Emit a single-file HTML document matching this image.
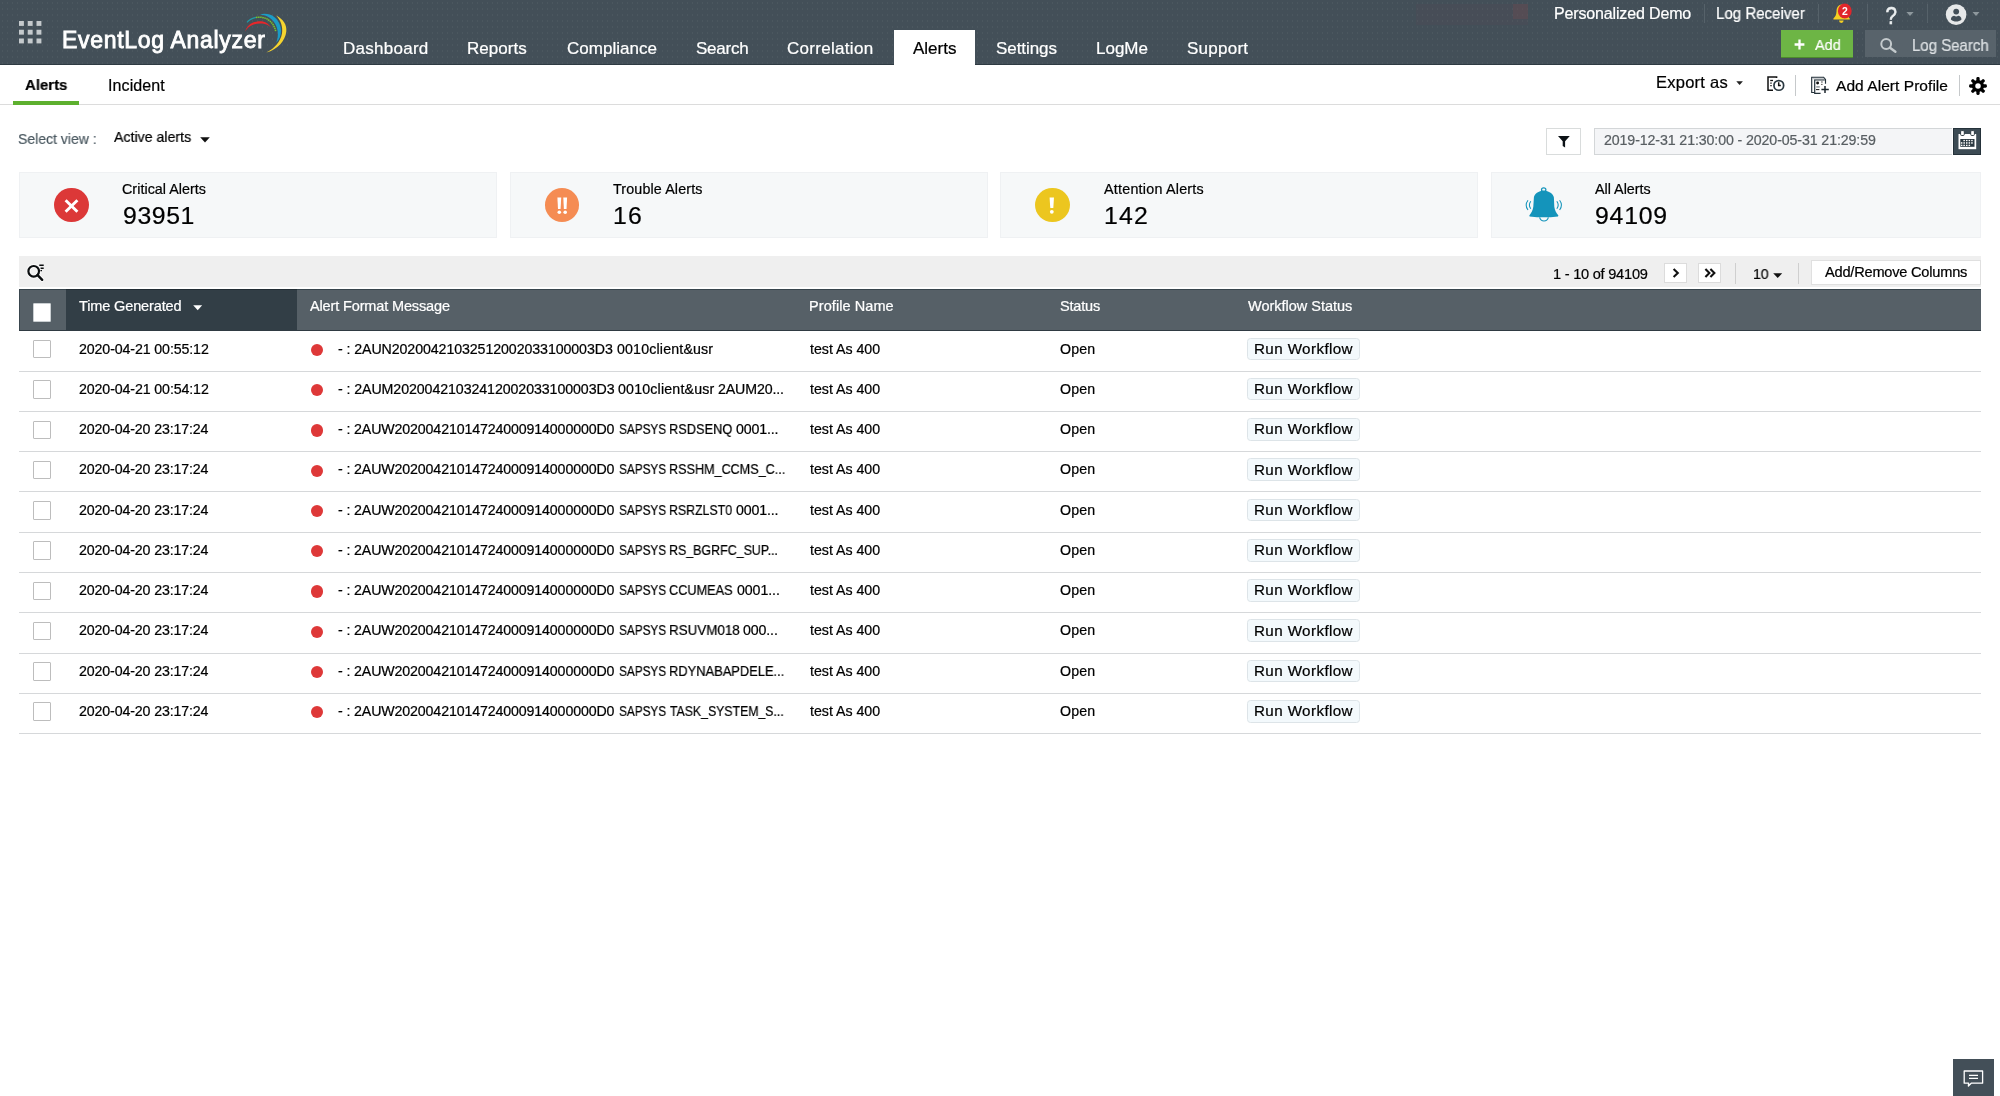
<!DOCTYPE html>
<html><head><meta charset="utf-8"><title>EventLog Analyzer</title>
<style>
*{box-sizing:border-box;margin:0;padding:0}
html,body{width:2000px;height:1096px;overflow:hidden;background:#fff}
body{position:relative;font-family:"Liberation Sans",sans-serif}
.t{position:absolute;white-space:nowrap;line-height:1;font-family:"Liberation Sans",sans-serif;will-change:transform;-webkit-text-stroke:0.22px currentColor}
.a{position:absolute}
#hdr{left:0;top:0;width:2000px;height:64.9px;background:#434f58;background-image:radial-gradient(circle,rgba(255,255,255,.045) .55px,transparent .95px);background-size:5px 6px}
#hdrsh{left:0;top:63.7px;width:2000px;height:1.2px;background:#2e3a42}
#tab{left:893.6px;top:29.6px;width:81.4px;height:36px;background:#fff}
.hs{top:4px;width:1px;height:19px;background:#56626a}
#add{left:1780.5px;top:30px;width:72.5px;height:27px;background:#6db545;box-shadow:0 1px 0 #4d8a2c}
#ls{left:1865px;top:30.2px;width:131.4px;height:26.5px;background:#58636b}
#subline{left:0;top:104.2px;width:2000px;height:1px;background:#dcdcdc}
#subgreen{left:12.8px;top:101.3px;width:66.4px;height:3.7px;background:#5db02e}
.ss{top:75.2px;width:1px;height:21.2px;background:#c6c9cb}
.card{top:172.4px;height:65.2px;background:#f6f8f9;border:1px solid #eff1f3}
.circ{top:187.7px;width:34.6px;height:34.3px;border-radius:50%}
#fbtn{left:1546.2px;top:128px;width:35px;height:26.8px;background:#fff;border:1px solid #d9dcdc}
#date{left:1594.1px;top:127.9px;width:357.9px;height:27px;background:#f4f5f7;border:1px solid #d3d6d8;border-right:0}
#cal{left:1953.4px;top:127.9px;width:27.7px;height:27px;background:#3c4b54;border:1px solid #25323a}
#tb{left:19.2px;top:256.2px;width:1961.6px;height:30.8px;background:#efefef}
.pb{top:263px;width:23.3px;height:20.4px;background:#fff;border:1px solid #dcdcdc}
.ts{top:262.5px;width:1px;height:21px;background:#cfcfcf}
#arc{left:1811px;top:259.5px;width:169.7px;height:25px;background:#fff;border:1px solid #e0e0e0}
#th{left:19px;top:288.8px;width:1962px;height:41.8px;background:#566067;border-top:1px solid #38454d;border-left:1px solid #3a464e}
#thd{left:66px;top:288.8px;width:231px;height:41.8px;background:#323e46;border-top:1px solid #222d34}
#thb{left:19px;top:329.6px;width:1962px;height:1.2px;background:#2f3a42}
#hcb{left:32.5px;top:302.5px;width:18.7px;height:19.2px;background:#fff;border:1.2px solid #c9ced1;border-radius:1px}
.cb{position:absolute;left:32.6px;width:18.4px;height:18.4px;background:#fff;border:1.3px solid #bdbdbd;border-radius:1px}
.dot{position:absolute;left:310.5px;width:12.3px;height:12.3px;border-radius:50%;background:#de3838}
.rw{position:absolute;left:1247.4px;width:113px;height:22.6px;background:#f3f9fc;border:1px solid #dde4e8;border-radius:3.5px}
.rl{position:absolute;left:19px;width:1962px;height:1px;background:#d6d8da}
#chat{left:1953px;top:1058.5px;width:40.6px;height:38px;background:#434f58}
svg{position:absolute;overflow:visible;will-change:transform}
.p{display:inline-block;width:0;height:0}

</style></head>
<body>
<div class="a" id="hdr"></div>
<div class="a" id="hdrsh"></div>
<div class="a" id="tab"></div>
<!-- grid icon -->
<svg style="left:18.9px;top:21.3px" width="23" height="23" viewBox="0 0 23 23"><g fill="#c5cacd">
<rect x="0" y="0" width="4.9" height="4.9"/><rect x="8.75" y="0" width="4.9" height="4.9"/><rect x="17.5" y="0" width="4.9" height="4.9"/>
<rect x="0" y="8.75" width="4.9" height="4.9"/><rect x="8.75" y="8.75" width="4.9" height="4.9"/><rect x="17.5" y="8.75" width="4.9" height="4.9"/>
<rect x="0" y="17.5" width="4.9" height="4.9"/><rect x="8.75" y="17.5" width="4.9" height="4.9"/><rect x="17.5" y="17.5" width="4.9" height="4.9"/></g></svg>
<!-- logo swoosh -->
<svg style="left:240px;top:10px" width="50" height="46" viewBox="240 10 50 46" fill="none">
<path d="M276.2 15.6 C283.5 19.5 287 25 286.3 31.5 C285.3 41 277.5 49.5 266.4 52.6 C274.5 48.2 280.6 41.5 282 33.5 C283 27 280.8 20.5 276.2 15.6 Z" fill="#f6d42f"/>
<path d="M260 14.4 C265 13.2 270.5 14 274.5 17.2 C278.6 20.6 281 25.5 281 31 C281 35.6 279.4 39.6 276.2 42.8 C277.6 39 278.2 35.2 277.7 31.4 C277 25.8 274.2 21 269.6 17.8 C266.8 15.8 263.5 14.7 260 14.4 Z" fill="#1b9bc6"/>
<path d="M247 22.4 C249.5 19.6 252.5 18 256 17.4" stroke="#1f9aa8" stroke-width="1.2"/>
<path d="M256 17.4 C259 16.9 262 17.2 265 18.1 C270.5 20.2 274.4 25 275.7 31.2" stroke="#7ac62c" stroke-width="1.5" stroke-dasharray="1.5 0.6"/>
<path d="M245 31.8 C246.2 27.6 249 24.4 253 22.6 C256 21.3 259.4 20.8 262.8 21.4 C266.2 22 269 24 271.2 27.8 C268.6 25.2 265.8 23.8 262.4 23.5 C259.4 23.2 256.4 23.6 253.6 24.6 C249.8 26 247 28.4 245 31.8 Z" fill="#e8262a"/>
</svg>
<div class="a" style="left:1416px;top:4px;width:112px;height:21px;background:rgba(110,72,74,.10)"></div>
<div class="a" style="left:1513px;top:4px;width:15px;height:15px;background:rgba(104,76,80,.42)"></div>
<!-- header right -->
<div class="a hs" style="left:1703.5px"></div>
<div class="a hs" style="left:1818px"></div>
<div class="a hs" style="left:1866.5px"></div>
<div class="a hs" style="left:1927px"></div>
<!-- bell -->
<svg style="left:1830px;top:0px" width="26" height="26" viewBox="1830 0 26 26">
<path d="M1841.6 4.6 C1838 5 1836.6 8 1836.5 11.4 C1836.4 14.4 1835.4 16.6 1833.4 18.4 V19.5 H1849.8 V18.4 C1847.8 16.6 1846.8 14.4 1846.7 11.4 C1846.6 8 1845.2 5 1841.6 4.6 Z" fill="#f4cf22"/>
<path d="M1839 20.6 a2.3 2.4 0 0 0 4.6 0 Z" fill="#f4cf22"/>
<ellipse cx="1844.8" cy="11" rx="6.9" ry="7.6" fill="#e0262c"/>
<text x="1844.8" y="14.6" font-family="Liberation Sans, sans-serif" font-size="10.4" font-weight="700" fill="#fff" text-anchor="middle">2</text>
</svg>
<!-- question -->
<svg style="left:1880px;top:0px" width="40" height="28" viewBox="1880 0 40 28">
<text x="0" y="0" transform="translate(1885.6 23.8) scale(0.86 1)" font-family="Liberation Sans, sans-serif" font-size="24" font-weight="400" fill="#eceff0" stroke="#eceff0" stroke-width="0.5">?</text>
<path d="M1906.4 11.9 h7.2 l-3.6 4.2 z" fill="#8e989d"/>
</svg>
<!-- user -->
<svg style="left:1940px;top:0px" width="44" height="28" viewBox="1940 0 44 28">
<circle cx="1956.1" cy="14.6" r="10.3" fill="#e6e8e9"/>
<circle cx="1956.2" cy="11.6" r="2.9" fill="#434f58"/>
<path d="M1950.9 19.6 C1951 17 1952.6 15.8 1954.2 15.8 C1955.4 16.8 1957 16.8 1958.2 15.8 C1959.8 15.8 1961.4 17 1961.5 19.6 C1960 21 1958.2 21.6 1956.2 21.6 C1954.2 21.6 1952.4 21 1950.9 19.6 Z" fill="#434f58"/>
<path d="M1972.5 11.9 h7 l-3.5 4.2 z" fill="#8e989d"/>
</svg>
<div class="a" id="add"></div>
<svg style="left:1793.5px;top:38.5px" width="11" height="11" viewBox="0 0 11 11"><path d="M5.5 0.6 V10.4 M0.6 5.5 H10.4" stroke="#fff" stroke-width="2.3"/></svg>
<div class="a" id="ls"></div>
<svg style="left:1875px;top:34px" width="26" height="22" viewBox="1875 34 26 22"><circle cx="1886.2" cy="44" r="4.9" fill="none" stroke="#c4cacd" stroke-width="2"/><path d="M1890 47.8 L1895.4 51.8" stroke="#c4cacd" stroke-width="2.4" stroke-linecap="round"/></svg>
<!-- subnav -->
<div class="a" id="subline"></div>
<div class="a" id="subgreen"></div>
<svg style="left:1735.5px;top:80.5px" width="8" height="5" viewBox="0 0 8 5"><path d="M0.3 0.3 h6.6 l-3.3 3.6 z" fill="#222"/></svg>
<!-- schedule icon -->
<svg style="left:1762px;top:72px" width="26" height="26" viewBox="1762 72 26 26" fill="none" stroke="#111" stroke-width="1.5">
<path d="M1776.6 78 V77.1 H1768 V90.2 H1773"/>
<path d="M1770.2 80.5 H1773" stroke-width="1.3"/><path d="M1770.2 83.1 H1771.8 M1770.2 85.7 H1771.8" stroke-width="1.2" stroke="#333"/>
<circle cx="1778.8" cy="85.4" r="4.85" stroke="#2a3841" stroke-width="1.7"/>
<path d="M1778.7 82.3 V85.6 H1780.8" stroke-width="1.5"/>
</svg>
<div class="a ss" style="left:1794.5px"></div>
<!-- add alert profile icon -->
<svg style="left:1806px;top:72px" width="28" height="26" viewBox="1806 72 28 26" fill="none" stroke="#25323b" stroke-width="1.3">
<path d="M1812 77.4 H1823.4 L1825.2 79.8 H1814 Z" fill="#c9cccf" stroke="none"/>
<path d="M1814.6 92.5 H1811.7 V77.2 H1823.6 L1825.5 79.4 V83.8" stroke-width="1.15"/>
<path d="M1820.6 93.3 H1814.7 V80 H1824.8" stroke-width="1.2"/>
<circle cx="1817.6" cy="83" r="1.45" fill="#111" stroke="none"/>
<path d="M1821 82 H1822.8" stroke-width="1.2" stroke="#555"/><path d="M1821 84.4 H1822.6" stroke-width="0.9" stroke="#444"/>
<path d="M1816.2 86.9 H1819.8" stroke-width="1.4" stroke="#8a9196"/>
<path d="M1816 89.6 H1819.4" stroke-width="1" stroke="#111"/>
<path d="M1825 86 V93 M1821.4 89.6 H1828.8" stroke="#1c262d" stroke-width="1.5"/>
</svg>
<div class="a ss" style="left:1959px"></div>
<!-- gear -->
<svg style="left:1969.1px;top:77.1px" width="18" height="18" viewBox="-9 -9 18 18">
<g fill="#000"><circle r="6.1"/>
<rect x="-1.65" y="-8.9" width="3.3" height="17.8" rx="1.3"/>
<rect x="-1.65" y="-8.9" width="3.3" height="17.8" rx="1.3" transform="rotate(45)"/>
<rect x="-1.65" y="-8.9" width="3.3" height="17.8" rx="1.3" transform="rotate(90)"/>
<rect x="-1.65" y="-8.9" width="3.3" height="17.8" rx="1.3" transform="rotate(135)"/></g>
<circle r="2.75" fill="#fff"/>
</svg>
<!-- select view caret -->
<svg style="left:199.5px;top:137px" width="10" height="6" viewBox="0 0 10 6"><path d="M0.2 0.3 h9.6 l-4.8 5.2 z" fill="#111"/></svg>
<!-- filter + date -->
<div class="a" id="fbtn"></div>
<svg style="left:1555px;top:133px" width="18" height="18" viewBox="1555 133 18 18"><path d="M1558 136 H1569.8 L1565.1 141.2 V147.6 L1562.7 146 V141.2 Z" fill="#0c1216"/></svg>
<div class="a" id="date"></div>
<div class="a" id="cal"></div>
<svg style="left:1955px;top:128px" width="26" height="26" viewBox="1955 128 26 26">
<path d="M1958.5 134 H1976.2 V149.2 H1958.5 Z" fill="#fff"/>
<rect x="1960.6" y="130.6" width="3.7" height="4.9" rx="1.1" fill="#fff" stroke="#25323a" stroke-width="0.9"/>
<rect x="1970.7" y="130.6" width="3.7" height="4.9" rx="1.1" fill="#fff" stroke="#25323a" stroke-width="0.9"/>
<rect x="1960.3" y="139" width="14.2" height="7.8" fill="#2b3941"/>
<g fill="#fff"><rect x="1963.4" y="139.9" width="1.5" height="1.3"/><rect x="1966" y="139.9" width="1.5" height="1.3"/><rect x="1968.6" y="139.9" width="1.5" height="1.3"/><rect x="1971.2" y="139.9" width="1.5" height="1.3"/>
<rect x="1960.9" y="142.2" width="1.5" height="1.5"/><rect x="1963.4" y="142.2" width="1.5" height="1.5"/><rect x="1966" y="142.2" width="1.5" height="1.5"/><rect x="1968.6" y="142.2" width="1.5" height="1.5"/><rect x="1971.2" y="142.2" width="1.5" height="1.5"/>
<rect x="1960.9" y="144.7" width="1.5" height="1.3"/><rect x="1963.4" y="144.7" width="1.5" height="1.3"/><rect x="1966" y="144.7" width="1.5" height="1.3"/><rect x="1968.6" y="144.7" width="1.5" height="1.3"/></g>
</svg>
<!-- cards -->
<div class="a card" style="left:19px;width:478.4px"></div>
<div class="a card" style="left:510px;width:477.8px"></div>
<div class="a card" style="left:1000px;width:478.4px"></div>
<div class="a card" style="left:1491px;width:490px"></div>
<div class="a circ" style="left:54px;background:#dc3838"></div>
<svg style="left:64px;top:198.5px" width="15" height="14" viewBox="0 0 15 14"><path d="M1.6 1.2 L13.4 12.8 M13.4 1.2 L1.6 12.8" stroke="#fff" stroke-width="2.9"/></svg>
<div class="a circ" style="left:544.6px;background:#f58c53"></div>
<svg style="left:556.6px;top:196.8px" width="11" height="18" viewBox="0 0 11 18" fill="#fff"><path d="M0.4 0.4 H4.2 L3.6 12 H1 Z"/><path d="M6.3 0.4 H10.1 L9.5 12 H6.9 Z"/><circle cx="2.3" cy="15.2" r="1.8"/><circle cx="8.2" cy="15.2" r="1.8"/></svg>
<div class="a circ" style="left:1035.2px;background:#ecc61f"></div>
<svg style="left:1049.1px;top:196.8px" width="6" height="18" viewBox="0 0 6 18" fill="#fff"><path d="M0.6 0.4 H5 L4.3 11.1 H1.3 Z"/><circle cx="2.8" cy="14.8" r="1.9"/></svg>
<!-- big bell -->
<svg style="left:1520px;top:184px" width="48" height="42" viewBox="1520 184 48 42">
<path d="M1543.7 190.4 C1538.6 191 1534.2 193.6 1533.9 197.4 L1533.3 206.8 C1532.8 210.4 1531.4 213 1529.3 215.4 L1529.6 216.6 L1537 217.2 H1550.6 L1558 216.6 L1558.4 215.4 C1556.2 213 1554.8 210.4 1554.3 206.8 L1553.9 197.4 C1553.6 193.6 1548.8 191 1543.7 190.4 Z" fill="#1494bb"/>
<ellipse cx="1543.7" cy="189.8" rx="2.2" ry="1.9" fill="none" stroke="#1494bb" stroke-width="1.25"/>
<path d="M1539.6 217.4 C1540.4 220 1542 221 1544 221 C1546 221 1547.6 220 1548.4 217.4" fill="none" stroke="#1494bb" stroke-width="1.2"/>
<g fill="none" stroke="#1494bb" stroke-width="1.05">
<path d="M1530.8 201.2 C1529 203.6 1529 206.4 1530.8 208.8"/><path d="M1528 200.2 C1525.6 203.4 1525.6 206.8 1528 210"/>
<path d="M1556.8 201.2 C1558.6 203.6 1558.6 206.4 1556.8 208.8"/><path d="M1559.6 200.2 C1562 203.4 1562 206.8 1559.6 210"/></g>
</svg>
<!-- toolbar -->
<div class="a" id="tb"></div>
<svg style="left:24px;top:260px" width="24" height="24" viewBox="24 260 24 24" fill="none">
<g stroke="#fff" stroke-opacity=".75"><circle cx="33.7" cy="271.3" r="5.3" stroke-width="4.2"/><path d="M37.6 275.2 L42.2 279.8" stroke-width="4.4" stroke-linecap="round"/></g>
<circle cx="33.7" cy="271.3" r="5.3" stroke="#0a0d0f" stroke-width="2.2"/><path d="M37.6 275.2 L42.2 279.8" stroke="#0a0d0f" stroke-width="2.4" stroke-linecap="round"/>
<path d="M39.3 265.3 H43.7 M40.6 268.2 H43.7" stroke="#0a0d0f" stroke-width="1.4"/><path d="M40.4 270.6 H42" stroke="#0a0d0f" stroke-width="1.3"/></svg>
<div class="a pb" style="left:1664px"></div>
<svg style="left:1672px;top:268.2px" width="8" height="10" viewBox="0 0 8 10"><path d="M1.6 0.9 L5.8 5 L1.6 9.1" fill="none" stroke="#111" stroke-width="2.1"/></svg>
<div class="a pb" style="left:1697.5px"></div>
<svg style="left:1703.5px;top:268.2px" width="12" height="10" viewBox="0 0 12 10"><path d="M1.4 0.9 L5.4 5 L1.4 9.1 M6.4 0.9 L10.4 5 L6.4 9.1" fill="none" stroke="#111" stroke-width="2.1"/></svg>
<div class="a ts" style="left:1735px"></div>
<svg style="left:1772.8px;top:272.6px" width="10" height="6" viewBox="0 0 10 6"><path d="M0.2 0.3 h9 l-4.5 4.8 z" fill="#111"/></svg>
<div class="a ts" style="left:1797.5px"></div>
<div class="a" id="arc"></div>
<!-- table head -->
<div class="a" id="th"></div>
<div class="a" id="thd"></div>
<div class="a" id="thb"></div>
<div class="a" id="hcb"></div>
<svg style="left:193px;top:304.8px" width="10" height="6" viewBox="0 0 10 6"><path d="M0.2 0.3 h9 l-4.5 5 z" fill="#fff"/></svg>
<!-- chat -->
<div class="a" id="chat"></div>
<svg style="left:1962.5px;top:1069.5px" width="21" height="19" viewBox="0 0 21 19" fill="none" stroke="#fff"><path d="M1.2 1 H19.6 V13.2 H8.2 L5.4 16 L5.6 13.2 H1.2 Z" stroke-width="1.3" stroke-linejoin="round"/><path d="M6 5.4 H15 M6 8.4 H15" stroke-width="1.3"/></svg>

<div class="cb" style="top:340.05px"></div>
<div class="dot" style="top:343.75px"></div>
<div class="rw" style="top:337.60px"></div>
<div class="rl" style="top:370.67px"></div>
<div class="cb" style="top:380.32px"></div>
<div class="dot" style="top:384.02px"></div>
<div class="rw" style="top:377.87px"></div>
<div class="rl" style="top:410.94px"></div>
<div class="cb" style="top:420.59px"></div>
<div class="dot" style="top:424.29px"></div>
<div class="rw" style="top:418.14px"></div>
<div class="rl" style="top:451.21px"></div>
<div class="cb" style="top:460.86px"></div>
<div class="dot" style="top:464.56px"></div>
<div class="rw" style="top:458.41px"></div>
<div class="rl" style="top:491.48px"></div>
<div class="cb" style="top:501.13px"></div>
<div class="dot" style="top:504.83px"></div>
<div class="rw" style="top:498.68px"></div>
<div class="rl" style="top:531.75px"></div>
<div class="cb" style="top:541.40px"></div>
<div class="dot" style="top:545.10px"></div>
<div class="rw" style="top:538.95px"></div>
<div class="rl" style="top:572.02px"></div>
<div class="cb" style="top:581.67px"></div>
<div class="dot" style="top:585.37px"></div>
<div class="rw" style="top:579.22px"></div>
<div class="rl" style="top:612.29px"></div>
<div class="cb" style="top:621.94px"></div>
<div class="dot" style="top:625.64px"></div>
<div class="rw" style="top:619.49px"></div>
<div class="rl" style="top:652.56px"></div>
<div class="cb" style="top:662.21px"></div>
<div class="dot" style="top:665.91px"></div>
<div class="rw" style="top:659.76px"></div>
<div class="rl" style="top:692.83px"></div>
<div class="cb" style="top:702.48px"></div>
<div class="dot" style="top:706.18px"></div>
<div class="rw" style="top:700.03px"></div>
<div class="rl" style="top:733.10px"></div>
<span class="t" id="t0" style="left:62.11px;top:29.00px;font-size:23.0px;color:#fff;font-weight:400;letter-spacing:0.692px;-webkit-text-stroke:0.85px #fff;">EventLog Analyzer</span>
<span class="t" id="t1" style="left:343.12px;top:40.00px;font-size:17px;color:#fff;font-weight:400;letter-spacing:0.262px;">Dashboard</span>
<span class="t" id="t2" style="left:467.32px;top:40.00px;font-size:17px;color:#fff;font-weight:400;letter-spacing:0.043px;">Reports</span>
<span class="t" id="t3" style="left:566.65px;top:40.00px;font-size:17px;color:#fff;font-weight:400;letter-spacing:0.026px;">Compliance</span>
<span class="t" id="t4" style="left:695.74px;top:40.00px;font-size:17px;color:#fff;font-weight:400;letter-spacing:-0.244px;">Search</span>
<span class="t" id="t5" style="left:787.25px;top:40.00px;font-size:17px;color:#fff;font-weight:400;letter-spacing:0.299px;">Correlation</span>
<span class="t" id="t6" style="left:995.94px;top:40.00px;font-size:17px;color:#fff;font-weight:400;letter-spacing:-0.067px;">Settings</span>
<span class="t" id="t7" style="left:1096.12px;top:40.00px;font-size:17px;color:#fff;font-weight:400;letter-spacing:-0.014px;">LogMe</span>
<span class="t" id="t8" style="left:1187.34px;top:40.00px;font-size:17px;color:#fff;font-weight:400;letter-spacing:0.255px;">Support</span>
<span class="t" id="t9" style="left:913.08px;top:40.00px;font-size:17px;color:#000;font-weight:400;letter-spacing:-0.008px;">Alerts</span>
<span class="t" id="t10" style="left:1553.80px;top:6.00px;font-size:16px;color:#fff;font-weight:400;letter-spacing:-0.148px;">Personalized Demo</span>
<span class="t" id="t11" style="left:1715.87px;top:6.00px;font-size:16px;color:#fff;font-weight:400;letter-spacing:0.000px;transform:scaleX(0.9416);transform-origin:0 0;">Log Receiver</span>
<span class="t" id="t12" style="left:1814.57px;top:37.00px;font-size:15.5px;color:#fff;font-weight:400;letter-spacing:0.000px;transform:scaleX(0.9334);transform-origin:0 0;">Add</span>
<span class="t" id="t13" style="left:1912.47px;top:38.00px;font-size:15.9px;color:#dce0e3;font-weight:400;letter-spacing:0.000px;transform:scaleX(0.9436);transform-origin:0 0;">Log Search</span>
<span class="t" id="t14" style="left:24.73px;top:77.00px;font-size:15.5px;color:#000;font-weight:700;letter-spacing:0.000px;transform:scaleX(0.9644);transform-origin:0 0;">Alerts</span>
<span class="t" id="t15" style="left:107.63px;top:78.00px;font-size:16px;color:#000;font-weight:400;letter-spacing:0.104px;">Incident</span>
<span class="t" id="t16" style="left:1656.26px;top:74.00px;font-size:16.5px;color:#000;font-weight:400;letter-spacing:0.253px;">Export as</span>
<span class="t" id="t17" style="left:1836.08px;top:78.00px;font-size:15.5px;color:#000;font-weight:400;letter-spacing:0.053px;">Add Alert Profile</span>
<span class="t" id="t18" style="left:18.47px;top:131.00px;font-size:15px;color:#4b5961;font-weight:400;letter-spacing:0.000px;transform:scaleX(0.9348);transform-origin:0 0;">Select view :</span>
<span class="t" id="t19" style="left:113.68px;top:129.00px;font-size:15px;color:#000;font-weight:400;letter-spacing:0.000px;transform:scaleX(0.9440);transform-origin:0 0;">Active alerts</span>
<span class="t" id="t20" style="left:1604.40px;top:133.00px;font-size:14.2px;color:#585e62;font-weight:400;letter-spacing:-0.106px;">2019-12-31 21:30:00 - 2020-05-31 21:29:59</span>
<span class="t" id="t21" style="left:122.38px;top:182.00px;font-size:14.3px;color:#000;font-weight:400;letter-spacing:0.043px;">Critical Alerts</span>
<span class="t" id="t22" style="left:123.35px;top:204.00px;font-size:24.8px;color:#000;font-weight:400;letter-spacing:0.596px;">93951</span>
<span class="t" id="t23" style="left:613.39px;top:182.00px;font-size:14.3px;color:#000;font-weight:400;letter-spacing:0.133px;">Trouble Alerts</span>
<span class="t" id="t24" style="left:613.22px;top:204.00px;font-size:24.8px;color:#000;font-weight:400;letter-spacing:1.165px;">16</span>
<span class="t" id="t25" style="left:1104.08px;top:182.00px;font-size:14.3px;color:#000;font-weight:400;letter-spacing:0.237px;">Attention Alerts</span>
<span class="t" id="t26" style="left:1103.82px;top:204.00px;font-size:24.8px;color:#000;font-weight:400;letter-spacing:1.171px;">142</span>
<span class="t" id="t27" style="left:1594.68px;top:182.00px;font-size:14.3px;color:#000;font-weight:400;letter-spacing:0.011px;">All Alerts</span>
<span class="t" id="t28" style="left:1594.55px;top:204.00px;font-size:24.8px;color:#000;font-weight:400;letter-spacing:0.787px;">94109</span>
<span class="t" id="t29" style="left:1552.70px;top:267.00px;font-size:14.6px;color:#000;font-weight:400;letter-spacing:-0.236px;">1 - 10 of 94109</span>
<span class="t" id="t30" style="left:1752.73px;top:267.00px;font-size:14.6px;color:#000;font-weight:400;letter-spacing:0.000px;transform:scaleX(0.9681);transform-origin:0 0;">10</span>
<span class="t" id="t31" style="left:1825.08px;top:265.00px;font-size:14.6px;color:#000;font-weight:400;letter-spacing:-0.216px;">Add/Remove Columns</span>
<span class="t" id="t32" style="left:79.28px;top:299.00px;font-size:14.5px;color:#fff;font-weight:400;letter-spacing:-0.130px;">Time Generated</span>
<span class="t" id="t33" style="left:310.08px;top:299.00px;font-size:14.5px;color:#fff;font-weight:400;letter-spacing:-0.141px;">Alert Format Message</span>
<span class="t" id="t34" style="left:808.92px;top:299.00px;font-size:14.5px;color:#fff;font-weight:400;letter-spacing:0.073px;">Profile Name</span>
<span class="t" id="t35" style="left:1059.95px;top:299.00px;font-size:14.5px;color:#fff;font-weight:400;letter-spacing:-0.189px;">Status</span>
<span class="t" id="t36" style="left:1247.75px;top:299.00px;font-size:14.5px;color:#fff;font-weight:400;letter-spacing:-0.009px;">Workflow Status</span>
<span class="t" id="t37" style="left:78.80px;top:342.00px;font-size:14.2px;color:#000;font-weight:400;letter-spacing:-0.108px;">2020-04-21 00:55:12</span>
<span class="t" id="t38" style="left:338.23px;top:342.00px;font-size:14.2px;color:#000;font-weight:400;letter-spacing:-0.083px;">- : 2AUN20200421032512002033100003D3</span>
<span class="t" id="t39" style="left:616.56px;top:342.00px;font-size:14.2px;color:#000;font-weight:400;letter-spacing:0.170px;">0010client&amp;usr</span>
<span class="t" id="t40" style="left:809.90px;top:342.00px;font-size:14.2px;color:#000;font-weight:400;letter-spacing:-0.015px;">test As 400</span>
<span class="t" id="t41" style="left:1060.14px;top:342.00px;font-size:14.2px;color:#000;font-weight:400;letter-spacing:0.152px;">Open</span>
<span class="t" id="t42" style="left:1254.46px;top:341.00px;font-size:15.2px;color:#000;font-weight:400;letter-spacing:0.395px;">Run Workflow</span>
<span class="t" id="t43" style="left:78.80px;top:382.00px;font-size:14.2px;color:#000;font-weight:400;letter-spacing:-0.108px;">2020-04-21 00:54:12</span>
<span class="t" id="t44" style="left:338.23px;top:382.00px;font-size:14.2px;color:#000;font-weight:400;letter-spacing:-0.078px;">- : 2AUM20200421032412002033100003D3</span>
<span class="t" id="t45" style="left:618.31px;top:382.00px;font-size:14.2px;color:#000;font-weight:400;letter-spacing:0.189px;">0010client&amp;usr</span>
<span class="t" id="t46" style="left:718.15px;top:382.00px;font-size:14.2px;color:#000;font-weight:400;letter-spacing:-0.124px;">2AUM20...</span>
<span class="t" id="t47" style="left:809.90px;top:382.00px;font-size:14.2px;color:#000;font-weight:400;letter-spacing:-0.015px;">test As 400</span>
<span class="t" id="t48" style="left:1060.14px;top:382.00px;font-size:14.2px;color:#000;font-weight:400;letter-spacing:0.152px;">Open</span>
<span class="t" id="t49" style="left:1254.46px;top:381.00px;font-size:15.2px;color:#000;font-weight:400;letter-spacing:0.395px;">Run Workflow</span>
<span class="t" id="t50" style="left:78.80px;top:422.00px;font-size:14.2px;color:#000;font-weight:400;letter-spacing:-0.124px;">2020-04-20 23:17:24</span>
<span class="t" id="t51" style="left:338.23px;top:422.00px;font-size:14.2px;color:#000;font-weight:400;letter-spacing:-0.125px;">- : 2AUW20200421014724000914000000D0</span>
<span class="t" id="t52" style="left:618.81px;top:422.00px;font-size:14.2px;color:#000;font-weight:400;letter-spacing:0.000px;transform:scaleX(0.8303);transform-origin:0 0;">SAPSYS</span>
<span class="t" id="t53" style="left:669.05px;top:422.00px;font-size:14.2px;color:#000;font-weight:400;letter-spacing:0.000px;transform:scaleX(0.9008);transform-origin:0 0;">RSDSENQ</span>
<span class="t" id="t54" style="left:735.81px;top:422.00px;font-size:14.2px;color:#000;font-weight:400;letter-spacing:-0.168px;">0001...</span>
<span class="t" id="t55" style="left:809.90px;top:422.00px;font-size:14.2px;color:#000;font-weight:400;letter-spacing:-0.015px;">test As 400</span>
<span class="t" id="t56" style="left:1060.14px;top:422.00px;font-size:14.2px;color:#000;font-weight:400;letter-spacing:0.152px;">Open</span>
<span class="t" id="t57" style="left:1254.46px;top:421.00px;font-size:15.2px;color:#000;font-weight:400;letter-spacing:0.395px;">Run Workflow</span>
<span class="t" id="t58" style="left:78.80px;top:462.00px;font-size:14.2px;color:#000;font-weight:400;letter-spacing:-0.124px;">2020-04-20 23:17:24</span>
<span class="t" id="t59" style="left:338.23px;top:462.00px;font-size:14.2px;color:#000;font-weight:400;letter-spacing:-0.125px;">- : 2AUW20200421014724000914000000D0</span>
<span class="t" id="t60" style="left:618.81px;top:462.00px;font-size:14.2px;color:#000;font-weight:400;letter-spacing:0.000px;transform:scaleX(0.8303);transform-origin:0 0;">SAPSYS</span>
<span class="t" id="t61" style="left:669.06px;top:462.00px;font-size:14.2px;color:#000;font-weight:400;letter-spacing:0.000px;transform:scaleX(0.8882);transform-origin:0 0;">RSSHM_CCMS_C...</span>
<span class="t" id="t62" style="left:809.90px;top:462.00px;font-size:14.2px;color:#000;font-weight:400;letter-spacing:-0.015px;">test As 400</span>
<span class="t" id="t63" style="left:1060.14px;top:462.00px;font-size:14.2px;color:#000;font-weight:400;letter-spacing:0.152px;">Open</span>
<span class="t" id="t64" style="left:1254.46px;top:462.00px;font-size:15.2px;color:#000;font-weight:400;letter-spacing:0.395px;">Run Workflow</span>
<span class="t" id="t65" style="left:78.80px;top:503.00px;font-size:14.2px;color:#000;font-weight:400;letter-spacing:-0.124px;">2020-04-20 23:17:24</span>
<span class="t" id="t66" style="left:338.23px;top:503.00px;font-size:14.2px;color:#000;font-weight:400;letter-spacing:-0.125px;">- : 2AUW20200421014724000914000000D0</span>
<span class="t" id="t67" style="left:618.81px;top:503.00px;font-size:14.2px;color:#000;font-weight:400;letter-spacing:0.000px;transform:scaleX(0.8303);transform-origin:0 0;">SAPSYS</span>
<span class="t" id="t68" style="left:669.08px;top:503.00px;font-size:14.2px;color:#000;font-weight:400;letter-spacing:0.000px;transform:scaleX(0.8693);transform-origin:0 0;">RSRZLST0</span>
<span class="t" id="t69" style="left:735.81px;top:503.00px;font-size:14.2px;color:#000;font-weight:400;letter-spacing:-0.168px;">0001...</span>
<span class="t" id="t70" style="left:809.90px;top:503.00px;font-size:14.2px;color:#000;font-weight:400;letter-spacing:-0.015px;">test As 400</span>
<span class="t" id="t71" style="left:1060.14px;top:503.00px;font-size:14.2px;color:#000;font-weight:400;letter-spacing:0.152px;">Open</span>
<span class="t" id="t72" style="left:1254.46px;top:502.00px;font-size:15.2px;color:#000;font-weight:400;letter-spacing:0.395px;">Run Workflow</span>
<span class="t" id="t73" style="left:78.80px;top:543.00px;font-size:14.2px;color:#000;font-weight:400;letter-spacing:-0.124px;">2020-04-20 23:17:24</span>
<span class="t" id="t74" style="left:338.23px;top:543.00px;font-size:14.2px;color:#000;font-weight:400;letter-spacing:-0.125px;">- : 2AUW20200421014724000914000000D0</span>
<span class="t" id="t75" style="left:618.81px;top:543.00px;font-size:14.2px;color:#000;font-weight:400;letter-spacing:0.000px;transform:scaleX(0.8303);transform-origin:0 0;">SAPSYS</span>
<span class="t" id="t76" style="left:669.08px;top:543.00px;font-size:14.2px;color:#000;font-weight:400;letter-spacing:0.000px;transform:scaleX(0.8765);transform-origin:0 0;">RS_BGRFC_SUP...</span>
<span class="t" id="t77" style="left:809.90px;top:543.00px;font-size:14.2px;color:#000;font-weight:400;letter-spacing:-0.015px;">test As 400</span>
<span class="t" id="t78" style="left:1060.14px;top:543.00px;font-size:14.2px;color:#000;font-weight:400;letter-spacing:0.152px;">Open</span>
<span class="t" id="t79" style="left:1254.46px;top:542.00px;font-size:15.2px;color:#000;font-weight:400;letter-spacing:0.395px;">Run Workflow</span>
<span class="t" id="t80" style="left:78.80px;top:583.00px;font-size:14.2px;color:#000;font-weight:400;letter-spacing:-0.124px;">2020-04-20 23:17:24</span>
<span class="t" id="t81" style="left:338.23px;top:583.00px;font-size:14.2px;color:#000;font-weight:400;letter-spacing:-0.125px;">- : 2AUW20200421014724000914000000D0</span>
<span class="t" id="t82" style="left:618.81px;top:583.00px;font-size:14.2px;color:#000;font-weight:400;letter-spacing:0.000px;transform:scaleX(0.8303);transform-origin:0 0;">SAPSYS</span>
<span class="t" id="t83" style="left:669.45px;top:583.00px;font-size:14.2px;color:#000;font-weight:400;letter-spacing:0.000px;transform:scaleX(0.8954);transform-origin:0 0;">CCUMEAS</span>
<span class="t" id="t84" style="left:737.06px;top:583.00px;font-size:14.2px;color:#000;font-weight:400;letter-spacing:-0.085px;">0001...</span>
<span class="t" id="t85" style="left:809.90px;top:583.00px;font-size:14.2px;color:#000;font-weight:400;letter-spacing:-0.015px;">test As 400</span>
<span class="t" id="t86" style="left:1060.14px;top:583.00px;font-size:14.2px;color:#000;font-weight:400;letter-spacing:0.152px;">Open</span>
<span class="t" id="t87" style="left:1254.46px;top:582.00px;font-size:15.2px;color:#000;font-weight:400;letter-spacing:0.395px;">Run Workflow</span>
<span class="t" id="t88" style="left:78.80px;top:623.00px;font-size:14.2px;color:#000;font-weight:400;letter-spacing:-0.124px;">2020-04-20 23:17:24</span>
<span class="t" id="t89" style="left:338.23px;top:623.00px;font-size:14.2px;color:#000;font-weight:400;letter-spacing:-0.125px;">- : 2AUW20200421014724000914000000D0</span>
<span class="t" id="t90" style="left:618.81px;top:623.00px;font-size:14.2px;color:#000;font-weight:400;letter-spacing:0.000px;transform:scaleX(0.8303);transform-origin:0 0;">SAPSYS</span>
<span class="t" id="t91" style="left:669.00px;top:623.00px;font-size:14.2px;color:#000;font-weight:400;letter-spacing:0.000px;transform:scaleX(0.9440);transform-origin:0 0;">RSUVM018</span>
<span class="t" id="t92" style="left:743.31px;top:623.00px;font-size:14.2px;color:#000;font-weight:400;letter-spacing:-0.124px;">000...</span>
<span class="t" id="t93" style="left:809.90px;top:623.00px;font-size:14.2px;color:#000;font-weight:400;letter-spacing:-0.015px;">test As 400</span>
<span class="t" id="t94" style="left:1060.14px;top:623.00px;font-size:14.2px;color:#000;font-weight:400;letter-spacing:0.152px;">Open</span>
<span class="t" id="t95" style="left:1254.46px;top:623.00px;font-size:15.2px;color:#000;font-weight:400;letter-spacing:0.395px;">Run Workflow</span>
<span class="t" id="t96" style="left:78.80px;top:664.00px;font-size:14.2px;color:#000;font-weight:400;letter-spacing:-0.124px;">2020-04-20 23:17:24</span>
<span class="t" id="t97" style="left:338.23px;top:664.00px;font-size:14.2px;color:#000;font-weight:400;letter-spacing:-0.125px;">- : 2AUW20200421014724000914000000D0</span>
<span class="t" id="t98" style="left:618.81px;top:664.00px;font-size:14.2px;color:#000;font-weight:400;letter-spacing:0.000px;transform:scaleX(0.8303);transform-origin:0 0;">SAPSYS</span>
<span class="t" id="t99" style="left:669.04px;top:664.00px;font-size:14.2px;color:#000;font-weight:400;letter-spacing:0.000px;transform:scaleX(0.9081);transform-origin:0 0;">RDYNABAPDELE...</span>
<span class="t" id="t100" style="left:809.90px;top:664.00px;font-size:14.2px;color:#000;font-weight:400;letter-spacing:-0.015px;">test As 400</span>
<span class="t" id="t101" style="left:1060.14px;top:664.00px;font-size:14.2px;color:#000;font-weight:400;letter-spacing:0.152px;">Open</span>
<span class="t" id="t102" style="left:1254.46px;top:663.00px;font-size:15.2px;color:#000;font-weight:400;letter-spacing:0.395px;">Run Workflow</span>
<span class="t" id="t103" style="left:78.80px;top:704.00px;font-size:14.2px;color:#000;font-weight:400;letter-spacing:-0.124px;">2020-04-20 23:17:24</span>
<span class="t" id="t104" style="left:338.23px;top:704.00px;font-size:14.2px;color:#000;font-weight:400;letter-spacing:-0.125px;">- : 2AUW20200421014724000914000000D0</span>
<span class="t" id="t105" style="left:618.81px;top:704.00px;font-size:14.2px;color:#000;font-weight:400;letter-spacing:0.000px;transform:scaleX(0.8303);transform-origin:0 0;">SAPSYS</span>
<span class="t" id="t106" style="left:669.82px;top:704.00px;font-size:14.2px;color:#000;font-weight:400;letter-spacing:0.000px;transform:scaleX(0.8652);transform-origin:0 0;">TASK_SYSTEM_S...</span>
<span class="t" id="t107" style="left:809.90px;top:704.00px;font-size:14.2px;color:#000;font-weight:400;letter-spacing:-0.015px;">test As 400</span>
<span class="t" id="t108" style="left:1060.14px;top:704.00px;font-size:14.2px;color:#000;font-weight:400;letter-spacing:0.152px;">Open</span>
<span class="t" id="t109" style="left:1254.46px;top:703.00px;font-size:15.2px;color:#000;font-weight:400;letter-spacing:0.395px;">Run Workflow</span>
</body></html>
